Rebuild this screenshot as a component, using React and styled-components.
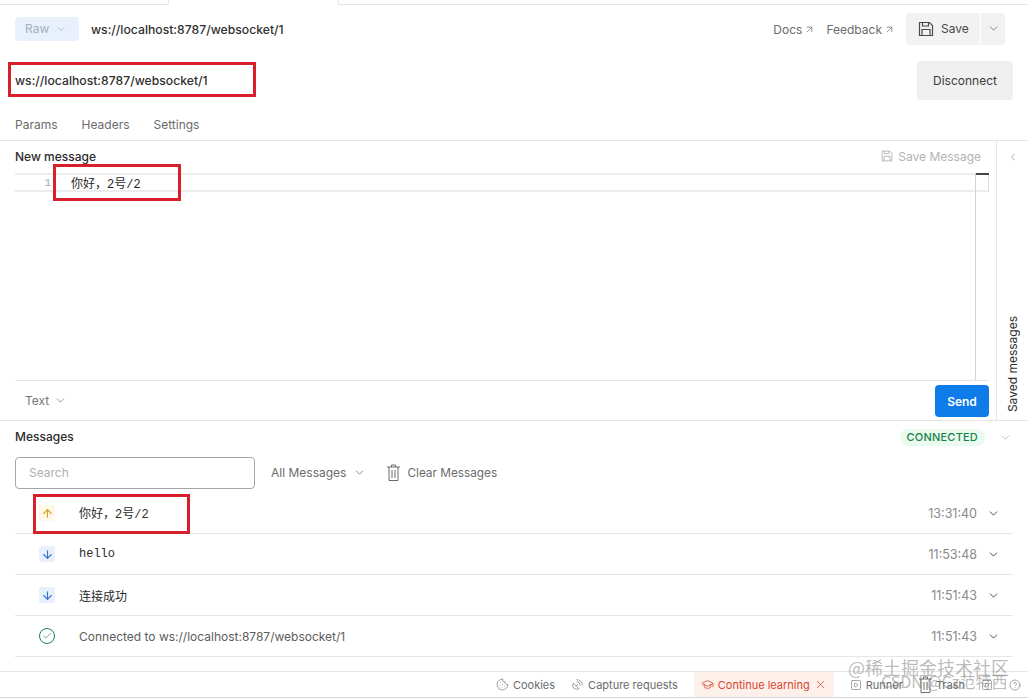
// App.jsx
import React from 'react';
import styled, { createGlobalStyle } from 'styled-components';
import {
  ArrowDown,
  ArrowUp,
  ArrowUpRight,
  Check,
  ChevronDown,
  ChevronLeft,
  CircleHelp,
  Cookie,
  GraduationCap,
  SatelliteDish,
  SquarePlay,
  X,
} from 'lucide-react';

const GlobalStyle = createGlobalStyle`
  html, body {
    margin: 0;
    padding: 0;
    background: #fff;
    font-family: Inter, "Noto Sans CJK SC", sans-serif;
    color: #212121;
  }
  * { box-sizing: border-box; }
`;

const SaveGlyph = ({ size = 16 }) => (
  <svg width={size} height={size} viewBox="0 0 16 16" fill="none" stroke="currentColor" strokeWidth="1.2">
    <path d="M1.5 1.5h10l3 3v10h-13z" />
    <path d="M4.5 1.5v3.5h6v-3.5" />
    <path d="M4 14.5v-6h8v6" />
  </svg>
);

const TrashGlyph = () => (
  <svg width="13" height="17" viewBox="0 0 13 17" fill="none" stroke="#6b6b6b" strokeWidth="1">
    <path d="M0 3h13M4.500 3V1h4v2M2 3v13.500h9V3M5 6v8M8 6v8" />
  </svg>
);

const messages = [
  { id: 1, dir: 'up', text: '你好，2号/2', mono: true, time: '13:31:40' },
  { id: 2, dir: 'down', text: 'hello', mono: true, time: '11:53:48' },
  { id: 3, dir: 'down', text: '连接成功', time: '11:51:43' },
  { id: 4, dir: 'ok', text: 'Connected to ws://localhost:8787/websocket/1', muted: true, time: '11:51:43' },
];

const DirectionIcon = ({ dir }) => {
  if (dir === 'ok') {
    return (
      <OkBadge>
        <Check size={10} strokeWidth={1.6} />
      </OkBadge>
    );
  }
  return (
    <ArrowBadge $dir={dir}>
      {dir === 'up' ? <ArrowUp size={13} strokeWidth={2} /> : <ArrowDown size={13} strokeWidth={2} />}
    </ArrowBadge>
  );
};

const App = () => (
  <Page>
    <GlobalStyle />
    <TabStrip>
      <TabStub $width={168} />
      <ActiveTab />
      <TabStub $grow />
    </TabStrip>

    <HeaderRow>
      <RawPill>
        Raw <ChevronDown size={12} strokeWidth={1.4} />
      </RawPill>
      <RequestName>ws://localhost:8787/websocket/1</RequestName>
      <HeaderActions>
        <HeaderLink>
          Docs <ArrowUpRight size={11} strokeWidth={1.5} />
        </HeaderLink>
        <HeaderLink>
          Feedback <ArrowUpRight size={11} strokeWidth={1.5} />
        </HeaderLink>
        <SaveGroup>
          <SaveButton>
            <SaveGlyph /> Save
          </SaveButton>
          <SaveMenu>
            <ChevronDown size={13} strokeWidth={1.3} />
          </SaveMenu>
        </SaveGroup>
      </HeaderActions>
    </HeaderRow>

    <UrlRow>
      <UrlText>ws://localhost:8787/websocket/1</UrlText>
      <DisconnectButton>Disconnect</DisconnectButton>
    </UrlRow>

    <TabsRow>
      <TabLabel>Params</TabLabel>
      <TabLabel>Headers</TabLabel>
      <TabLabel>Settings</TabLabel>
    </TabsRow>

    <Composer>
      <ComposerMain>
        <ComposerHead>
          <SectionTitle>New message</SectionTitle>
          <SaveMessage>
            <SaveGlyph size={12} /> Save Message
          </SaveMessage>
        </ComposerHead>
        <Editor>
          <EditorLine>
            <LineNumber>1</LineNumber>
            <CodeText>你好，2号/2</CodeText>
          </EditorLine>
          <ScrollMark />
        </Editor>
        <ComposerFoot>
          <TextSelect>
            Text <ChevronDown size={13} strokeWidth={1.4} />
          </TextSelect>
          <SendButton>Send</SendButton>
        </ComposerFoot>
      </ComposerMain>
      <SidePanel>
        <ChevronLeft size={12} strokeWidth={1.4} />
        <SideLabel>Saved messages</SideLabel>
      </SidePanel>
    </Composer>

    <MessagesHead>
      <SectionTitle>Messages</SectionTitle>
      <StatusWrap>
        <StatusPill>CONNECTED</StatusPill>
        <ChevronDown size={13} strokeWidth={1.3} color="#a6a6a6" />
      </StatusWrap>
    </MessagesHead>

    <FilterRow>
      <SearchBox>Search</SearchBox>
      <FilterLabel>
        All Messages <ChevronDown size={13} strokeWidth={1.4} />
      </FilterLabel>
      <ClearLabel>
        <TrashGlyph /> Clear Messages
      </ClearLabel>
    </FilterRow>

    <MessageList>
      {messages.map((msg) => (
        <MessageRow key={msg.id}>
          <DirectionIcon dir={msg.dir} />
          <MessageText $mono={msg.mono} $muted={msg.muted}>
            {msg.text}
          </MessageText>
          <MessageTime>{msg.time}</MessageTime>
          <ChevronDown size={13} strokeWidth={1.6} color="#333" />
        </MessageRow>
      ))}
    </MessageList>

    <StatusBar>
      <BarItem>
        <Cookie size={13} strokeWidth={1.2} /> Cookies
      </BarItem>
      <BarItem>
        <SatelliteDish size={13} strokeWidth={1.2} /> Capture requests
      </BarItem>
      <LearningItem>
        <GraduationCap size={13} strokeWidth={1.5} /> Continue learning
        <X size={13} strokeWidth={1.4} />
      </LearningItem>
      <BarItem>
        <SquarePlay size={12} strokeWidth={1.2} /> Runner
      </BarItem>
      <BarItem>
        <TrashGlyph /> Trash
      </BarItem>
      <BarIcons>
        <SquarePlay size={12} strokeWidth={1.2} />
        <CircleHelp size={12} strokeWidth={1.2} />
      </BarIcons>
    </StatusBar>
    <BottomEdge />

    <RedBox $x={8} $y={62} $w={248} $h={35} />
    <RedBox $x={53} $y={164} $w={128} $h={37} />
    <RedBox $x={33} $y={494} $w={157} $h={40} />

    <WatermarkTop>@稀土掘金技术社区</WatermarkTop>
    <WatermarkBottom>CSDN @Cz范特西</WatermarkBottom>
  </Page>
);

const Page = styled.div`
  position: relative;
  width: 1028px;
  height: 698px;
  overflow: hidden;
  display: flex;
  flex-direction: column;
  font-size: 12px;
`;

const TabStrip = styled.div`
  display: flex;
  height: 5px;
  flex: none;
`;

const TabStub = styled.div`
  border-bottom: 1px solid #e6e6e6;
  width: ${(p) => (p.$width ? `${p.$width}px` : 'auto')};
  flex: ${(p) => (p.$grow ? 1 : 'none')};
`;

const ActiveTab = styled.div`
  width: 171px;
  border-left: 1px solid #e6e6e6;
  border-right: 1px solid #e6e6e6;
`;

const HeaderRow = styled.div`
  display: flex;
  align-items: center;
  height: 48px;
  flex: none;
  padding: 0 15px;
`;

const RawPill = styled.div`
  display: flex;
  align-items: center;
  gap: 6px;
  width: 64px;
  height: 24px;
  margin-top: -1px;
  padding-left: 10px;
  border-radius: 4px;
  background: #e8f0fb;
  color: #a3afbe;
  font-size: 12px;
`;

const RequestName = styled.div`
  margin-left: 12px;
  font-size: 12.2px;
  font-weight: 500;
  color: #303030;
`;

const HeaderActions = styled.div`
  margin-left: auto;
  margin-right: 8px;
  display: flex;
  align-items: center;
  gap: 11px;
  margin-top: -1px;
`;

const HeaderLink = styled.div`
  display: flex;
  align-items: center;
  gap: 2px;
  color: #6b6b6b;
  font-size: 12px;
  margin-top: 2px;
`;

const SaveGroup = styled.div`
  display: flex;
  gap: 1px;
`;

const SaveButton = styled.div`
  display: flex;
  align-items: center;
  gap: 7px;
  width: 74px;
  height: 32px;
  padding-left: 12px;
  border-radius: 4px 0 0 4px;
  background: #f2f2f2;
  color: #4a4a4a;
`;

const SaveMenu = styled.div`
  display: flex;
  align-items: center;
  justify-content: center;
  width: 24px;
  height: 32px;
  border-radius: 0 4px 4px 0;
  background: #f2f2f2;
  color: #555;
`;

const UrlRow = styled.div`
  display: flex;
  align-items: center;
  justify-content: space-between;
  height: 47px;
  flex: none;
  padding: 8px 15px 0;
`;

const UrlText = styled.div`
  font-size: 12.2px;
  font-weight: 500;
  color: #303030;
`;

const DisconnectButton = styled.div`
  display: flex;
  align-items: center;
  justify-content: center;
  width: 96px;
  height: 39px;
  border-radius: 4px;
  background: #f0f0f0;
  color: #3c3c3c;
  font-size: 12px;
`;

const TabsRow = styled.div`
  display: flex;
  align-items: center;
  gap: 24px;
  height: 41px;
  flex: none;
  padding: 8px 15px 0;
  border-bottom: 1px solid #e6e6e6;
`;

const TabLabel = styled.div`
  color: #6b6b6b;
  font-size: 12px;
`;

const Composer = styled.div`
  display: flex;
  height: 280px;
  flex: none;
  border-bottom: 1px solid #e6e6e6;
`;

const ComposerMain = styled.div`
  flex: 1;
  display: flex;
  flex-direction: column;
  padding: 0 7px 0 15px;
  min-width: 0;
`;

const ComposerHead = styled.div`
  display: flex;
  align-items: center;
  justify-content: space-between;
  height: 32px;
  flex: none;
  padding: 0 8px 2px 0;
`;

const SectionTitle = styled.div`
  font-size: 12px;
  font-weight: 500;
  color: #2b2b2b;
`;

const SaveMessage = styled.div`
  display: flex;
  align-items: center;
  gap: 5px;
  color: #b3b3b3;
  font-size: 12px;
`;

const Editor = styled.div`
  position: relative;
  flex: 1;
  padding-right: 13px;
`;

const EditorLine = styled.div`
  display: flex;
  align-items: center;
  height: 19px;
  border-top: 2px solid #ececec;
  border-bottom: 2px solid #ececec;
  margin-right: -13px;
`;

const LineNumber = styled.span`
  width: 36px;
  text-align: right;
  color: #a6a6a6;
  font-family: "Liberation Mono", monospace;
  font-size: 11px;
`;

const CodeText = styled.span`
  margin-left: 20px;
  font-size: 12px;
  color: #1f1f1f;
  font-family: "Liberation Mono", "Noto Sans CJK SC", monospace;
`;

const ScrollMark = styled.div`
  position: absolute;
  top: 0;
  right: 0;
  bottom: 0;
  width: 14px;
  border-left: 1px solid #d4d4d4;
  &::before {
    content: '';
    position: absolute;
    top: 0;
    left: 0;
    right: 0;
    height: 2px;
    background: #444;
  }
  &::after {
    content: '';
    position: absolute;
    top: 2px;
    left: 0;
    right: 0;
    height: 17px;
    border-right: 1px solid #dcdcdc;
  }
`;

const ComposerFoot = styled.div`
  display: flex;
  align-items: center;
  justify-content: space-between;
  height: 40px;
  flex: none;
  padding-left: 10px;
  border-top: 1px solid #e6e6e6;
`;

const TextSelect = styled.div`
  display: flex;
  align-items: center;
  gap: 5px;
  color: #777;
  font-size: 12px;
`;

const SendButton = styled.div`
  display: flex;
  align-items: center;
  justify-content: center;
  width: 54px;
  height: 32px;
  margin-top: 1px;
  border-radius: 4px;
  background: #0d7ce8;
  color: #fff;
  font-size: 12px;
  font-weight: 600;
`;

const SidePanel = styled.div`
  width: 32px;
  flex: none;
  display: flex;
  flex-direction: column;
  align-items: center;
  justify-content: space-between;
  padding: 10px 0 8px;
  border-left: 1px solid #e6e6e6;
  color: #8a8a8a;
`;

const SideLabel = styled.div`
  writing-mode: vertical-rl;
  transform: rotate(180deg);
  font-size: 12px;
  color: #2f2f2f;
`;

const MessagesHead = styled.div`
  display: flex;
  align-items: center;
  justify-content: space-between;
  height: 33px;
  flex: none;
  padding: 0 16px 2px 15px;
`;

const StatusWrap = styled.div`
  display: flex;
  align-items: center;
  gap: 14px;
  margin-top: 2px;
`;

const StatusPill = styled.div`
  height: 17px;
  line-height: 17px;
  padding: 0 7px;
  border-radius: 8px;
  background: #eafaef;
  color: #17824a;
  font-size: 11px;
  font-weight: 500;
  letter-spacing: 0.2px;
`;

const FilterRow = styled.div`
  display: flex;
  align-items: center;
  height: 36px;
  flex: none;
  padding: 0 15px;
  margin-top: 1px;
`;

const SearchBox = styled.div`
  display: flex;
  align-items: center;
  width: 240px;
  height: 32px;
  padding: 0 0 1px 13px;
  border: 1px solid #a6a6a6;
  border-radius: 4px;
  color: #b0b0b0;
  font-size: 12px;
`;

const FilterLabel = styled.div`
  display: flex;
  align-items: center;
  gap: 7px;
  margin: -1px 0 0 16px;
  color: #6b6b6b;
  font-size: 12px;
`;

const ClearLabel = styled.div`
  display: flex;
  align-items: center;
  gap: 7px;
  margin: -1px 0 0 21px;
  color: #6b6b6b;
  font-size: 11.8px;
`;

const MessageList = styled.div`
  padding: 0 15px;
  margin-top: 2px;
  flex: none;
`;

const MessageRow = styled.div`
  display: flex;
  align-items: center;
  height: 41px;
  padding: 0 13px 0 24px;
  border-bottom: 1px solid #e6e6e6;
`;

const ArrowBadge = styled.div`
  display: flex;
  align-items: center;
  justify-content: center;
  width: 16px;
  height: 16px;
  border-radius: 2px;
  background: ${(p) => (p.$dir === 'up' ? '#fff8e6' : '#e8f0fb')};
  color: ${(p) => (p.$dir === 'up' ? '#d4a11e' : '#2f73c9')};
`;

const OkBadge = styled.div`
  display: flex;
  align-items: center;
  justify-content: center;
  width: 16px;
  height: 16px;
  border-radius: 50%;
  border: 1px solid #17824a;
  color: #17824a;
`;

const MessageText = styled.div`
  margin-left: 24px;
  flex: 1;
  font-size: 12px;
  color: ${(p) => (p.$muted ? '#5c5c5c' : '#2a2a2a')};
  font-family: ${(p) => (p.$mono ? '"Liberation Mono", "Noto Sans CJK SC", monospace' : 'Inter, "Noto Sans CJK SC", sans-serif')};
`;

const MessageTime = styled.div`
  margin-right: 10px;
  color: #8a8a8a;
  font-size: 12.5px;
`;

const StatusBar = styled.div`
  display: flex;
  align-items: center;
  justify-content: flex-end;
  height: 26px;
  margin-top: 14px;
  flex: none;
  gap: 16px;
  padding-right: 7px;
  border-top: 1px solid #e6e6e6;
  color: #6b6b6b;
  font-size: 11px;
`;

const BarItem = styled.div`
  display: flex;
  align-items: center;
  gap: 4px;
`;

const LearningItem = styled.div`
  display: flex;
  align-items: center;
  gap: 4px;
  height: 25px;
  padding: 0 7px;
  background: #fdf0ea;
  color: #d9462f;
`;

const BarIcons = styled.div`
  display: flex;
  align-items: center;
  gap: 16px;
`;

const BottomEdge = styled.div`
  height: 2px;
  flex: none;
  background: #d6d6d6;
`;

const RedBox = styled.div`
  position: absolute;
  left: ${(p) => p.$x}px;
  top: ${(p) => p.$y}px;
  width: ${(p) => p.$w}px;
  height: ${(p) => p.$h}px;
  border: 3px solid #d8202c;
`;

const WatermarkTop = styled.div`
  position: absolute;
  left: 848px;
  top: 654px;
  font-size: 18px;
  color: rgba(120, 120, 120, 0.5);
  font-family: "Noto Sans CJK SC", sans-serif;
`;

const WatermarkBottom = styled.div`
  position: absolute;
  left: 881px;
  top: 669px;
  font-size: 16px;
  color: rgba(120, 120, 120, 0.5);
  font-family: "Noto Sans CJK SC", sans-serif;
`;

export default App;
